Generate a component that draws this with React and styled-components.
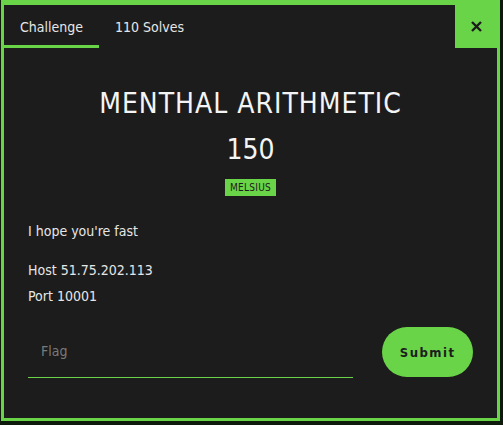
import React from "react";
import styled, { createGlobalStyle } from "styled-components";

const GREEN = "#6ad448";
const BG = "#1c1c1c";

const Global = createGlobalStyle`
  html, body { margin: 0; padding: 0; background: #0e1a0b; }
  body { font-family: "DejaVu Sans Condensed", "DejaVu Sans", sans-serif; }
  * { box-sizing: border-box; }
`;

const Page = styled.div`
  width: 503px;
  height: 425px;
  padding: 0 3px 4px 1px;
  overflow: hidden;
`;

const Modal = styled.div`
  width: 499px;
  height: 421px;
  background: ${BG};
  border: 3px solid ${GREEN};
  border-top-width: 5px;
  display: flex;
  flex-direction: column;
`;

const TabBar = styled.div`
  display: flex;
  align-items: stretch;
  height: 43px;
`;

const Tab = styled.div`
  padding: 3px 16px 0;
  display: flex;
  align-items: center;
  font-size: 14px;
  color: #e6e6e6;
  border-bottom: 3px solid ${(p) => (p.$active ? GREEN : "transparent")};
  min-width: ${(p) => p.$w || "auto"};
`;

const Spacer = styled.div`
  flex: 1;
`;

const Close = styled.button`
  width: 42px;
  border: none;
  background: ${GREEN};
  display: flex;
  align-items: center;
  justify-content: center;
  padding: 0;
  cursor: pointer;
`;

const Body = styled.div`
  flex: 1;
  padding: 0 24px;
  display: flex;
  flex-direction: column;
`;

const Title = styled.h1`
  margin: 39px 0 0;
  text-align: center;
  font-weight: 400;
  font-size: 28px;
  letter-spacing: 1px;
  color: #f4f4f4;
  line-height: 34px;
`;

const Points = styled.div`
  margin-top: 12px;
  text-align: center;
  font-size: 28px;
  color: #f4f4f4;
  line-height: 34px;
`;

const BadgeRow = styled.div`
  display: flex;
  justify-content: center;
  margin-top: 12px;
`;

const Badge = styled.span`
  background: ${GREEN};
  color: #1c1c1c;
  font-size: 10px;
  line-height: 17px;
  padding: 0 5px;
  letter-spacing: 0.3px;
`;

const Desc = styled.p`
  margin: 25px 0 0;
  font-size: 14px;
  color: #e6e6e6;
  line-height: 20px;
`;

const Info = styled.div`
  margin-top: 19px;
  display: flex;
  flex-direction: column;
  gap: 6px;
  font-size: 14px;
  color: #e6e6e6;
  line-height: 20px;
`;

const Form = styled.form`
  margin-top: 21px;
  display: flex;
  align-items: flex-start;
  gap: 28px;
`;

const Input = styled.input`
  width: 327px;
  height: 51px;
  background: transparent;
  border: none;
  border-bottom: 1px solid ${GREEN};
  padding: 0 13px 2px;
  color: #e6e6e6;
  font-family: inherit;
  font-size: 14px;
  outline: none;
  &::placeholder { color: #7a7a7a; }
`;

const Submit = styled.button`
  width: 91px;
  height: 50px;
  margin-left: 1px;
  border-radius: 25px;
  border: none;
  background: ${GREEN};
  color: #1c1c1c;
  font-family: inherit;
  font-weight: 700;
  font-size: 13px;
  letter-spacing: 1.5px;
  cursor: pointer;
`;

export default function App() {
  return (
    <Page>
      <Global />
      <Modal>
        <TabBar>
          <Tab $active $w="93px">Challenge</Tab>
          <Tab>110 Solves</Tab>
          <Spacer />
          <Close aria-label="Close">
            <svg width="11" height="11" viewBox="0 0 11 11">
              <path d="M1 1L10 10M10 1L1 10" stroke="#1c1c1c" strokeWidth="2.4" />
            </svg>
          </Close>
        </TabBar>
        <Body>
          <Title>MENTHAL ARITHMETIC</Title>
          <Points>150</Points>
          <BadgeRow>
            <Badge>MELSIUS</Badge>
          </BadgeRow>
          <Desc>I hope you're fast</Desc>
          <Info>
            <span>Host 51.75.202.113</span>
            <span>Port 10001</span>
          </Info>
          <Form onSubmit={(e) => e.preventDefault()}>
            <Input placeholder="Flag" />
            <Submit type="submit">Submit</Submit>
          </Form>
        </Body>
      </Modal>
    </Page>
  );
}
